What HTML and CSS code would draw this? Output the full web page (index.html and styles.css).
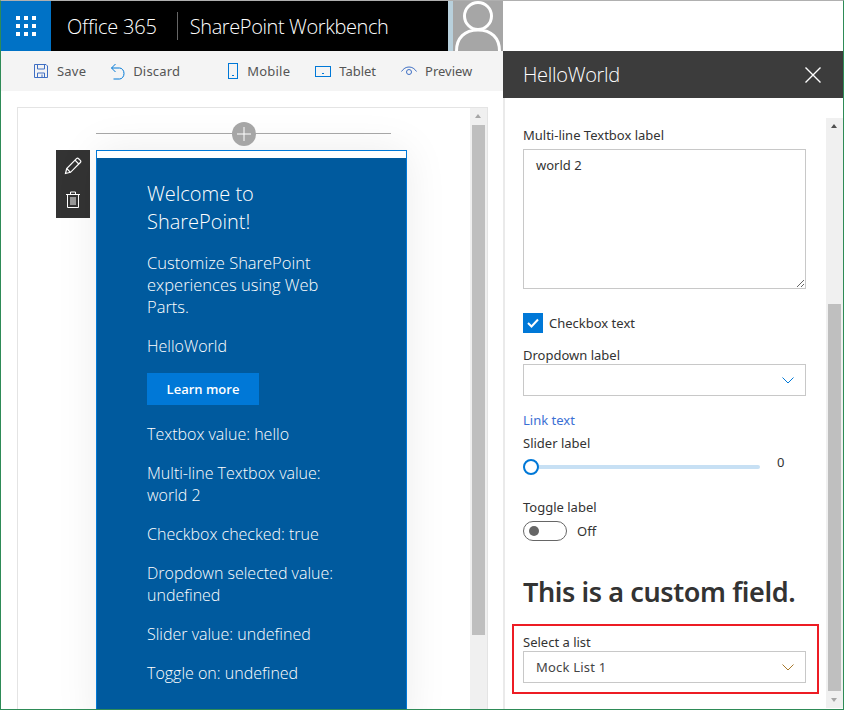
FILE: index.html
```html
<!DOCTYPE html>
<html lang="en">
<head>
    <meta charset="UTF-8">
    <title>SharePoint Workbench</title>
    <link rel="stylesheet" href="styles.css">
</head>
<body>
<div class="window">
    <div class="main">
        <div class="suite-bar">
            <div class="waffle">
                <svg width="20" height="20" viewBox="0 0 20 20" fill="#fff">
                    <rect x="0" y="0" width="4" height="4"/><rect x="8" y="0" width="4" height="4"/><rect x="16" y="0" width="4" height="4"/>
                    <rect x="0" y="8" width="4" height="4"/><rect x="8" y="8" width="4" height="4"/><rect x="16" y="8" width="4" height="4"/>
                    <rect x="0" y="16" width="4" height="4"/><rect x="8" y="16" width="4" height="4"/><rect x="16" y="16" width="4" height="4"/>
                </svg>
            </div>
            <span class="brand">Office 365</span>
            <span class="brand-sep"></span>
            <span class="app-name">SharePoint Workbench</span>
            <div class="avatar">
                <svg width="46" height="50" viewBox="0 0 46 50" fill="none" stroke="#fff" stroke-width="3">
                    <circle cx="23" cy="15" r="13.5"/>
                    <path d="M1.5 50c0-13 8-21 21.500-21s21.500 8 21.500 21"/>
                </svg>
            </div>
        </div>

        <div class="command-bar">
            <div class="cmd-group">
                <span class="cmd">
                    <svg width="16" height="16" viewBox="0 0 16 16" fill="none" stroke="#3f6fc4">
                        <path d="M1.500 1.500h11.500l1.500 1.500v11.500h-13z"/><path d="M4.500 1.500v4.500h7v-4.500"/><path d="M4.500 14.500v-4.500h7v4.500"/><path d="M9 11.500v3"/>
                    </svg>
                    Save
                </span>
                <span class="cmd">
                    <svg width="15" height="17" viewBox="0 0 15 17" fill="none" stroke="#0078d7">
                        <path d="M5.500 1l-4 4 4 4"/><path d="M1.500 5h8a4.500 5.500 0 0 1 0 11h-6"/>
                    </svg>
                    Discard
                </span>
            </div>
            <div class="cmd-group cmd-group-right">
                <span class="cmd">
                    <svg width="12" height="16" viewBox="0 0 12 16" fill="none" stroke="#0078d7">
                        <rect x="1.500" y="0.500" width="9" height="15"/><path d="M5 12.500h2"/>
                    </svg>
                    Mobile
                </span>
                <span class="cmd cmd-tight">
                    <svg width="16" height="12" viewBox="0 0 16 12" fill="none" stroke="#0078d7">
                        <rect x="0.500" y="1.500" width="15" height="10"/><path d="M7 8.500h2"/>
                    </svg>
                    Tablet
                </span>
                <span class="cmd cmd-tight">
                    <svg width="16" height="10" viewBox="0 0 16 10" fill="none" stroke="#3f6fc4">
                        <path d="M0.500 5.500c2-3 4.500-4.500 7.500-4.500s5.500 1.500 7.500 4.500"/><circle cx="8" cy="6" r="2.500"/>
                    </svg>
                    Preview
                </span>
            </div>
        </div>

        <div class="canvas">
            <div class="canvas-frame">
                <div class="canvas-content">
                    <div class="add-row">
                        <span class="add-btn">
                            <svg width="14" height="14" viewBox="0 0 14 14" stroke="#fff"><path d="M7 0v14M0 7h14"/></svg>
                        </span>
                    </div>
                    <div class="part-wrap">
                        <div class="part-tools">
                            <svg width="18" height="18" viewBox="0 0 18 18" fill="none" stroke="#fff" stroke-width="1.200">
                                <path d="M1.500 16.500l1.200-5L12.500 1.700a1.500 1.500 0 0 1 2.100 0l1.700 1.700a1.500 1.500 0 0 1 0 2.100L6.500 15.300z"/><path d="M2.700 11.500l3.800 3.800M11 3.200l3.800 3.800"/>
                            </svg>
                            <svg width="14" height="17" viewBox="0 0 14 17" fill="none" stroke="#fff">
                                <path d="M0 3.500h14M4.500 3.500v-2.500h5v2.500M1.500 3.500v13h11v-13M5 6v8M7 6v8M9 6v8"/>
                            </svg>
                        </div>
                        <div class="part">
                            <div class="part-top"></div>
                            <div class="part-body">
                                <h2 class="part-title">Welcome to SharePoint!</h2>
                                <p class="part-sub">Customize SharePoint experiences using Web Parts.</p>
                                <p>HelloWorld</p>
                                <a class="learn-btn">Learn more</a>
                                <p>Textbox value: hello</p>
                                <p>Multi-line Textbox value: world 2</p>
                                <p>Checkbox checked: true</p>
                                <p>Dropdown selected value: undefined</p>
                                <p>Slider value: undefined</p>
                                <p>Toggle on: undefined</p>
                            </div>
                        </div>
                    </div>
                </div>
                <div class="scrollbar canvas-scroll">
                    <span class="arrow-up"></span>
                    <span class="thumb"></span>
                    <span class="arrow-down"></span>
                </div>
            </div>
        </div>
    </div>

    <div class="side">
        <div class="side-gap"></div>
        <div class="panel">
            <div class="panel-head">
                <span class="panel-title">HelloWorld</span>
                <svg width="16" height="16" viewBox="0 0 16 16" stroke="#fff" stroke-width="1.400"><path d="M0.500 0.500l15 15M15.500 0.500l-15 15"/></svg>
            </div>
            <div class="panel-main">
                <div class="panel-body">
                    <label class="field-label">Multi-line Textbox label</label>
                    <textarea class="textarea">world 2</textarea>

                    <div class="check-row">
                        <span class="checkbox">
                            <svg width="12" height="10" viewBox="0 0 12 10" fill="none" stroke="#fff" stroke-width="2"><path d="M1 5l3.500 3.500L11 1.500"/></svg>
                        </span>
                        Checkbox text
                    </div>

                    <label class="field-label dropdown-label">Dropdown label</label>
                    <div class="dropdown">
                        <span></span>
                        <svg class="chevron" width="12" height="7" viewBox="0 0 12 7" fill="none" stroke="#0078d7"><path d="M0.500 0.500L6 6l5.500-5.500"/></svg>
                    </div>

                    <a class="link">Link text</a>

                    <label class="field-label">Slider label</label>
                    <div class="slider-row">
                        <div class="slider"><span class="slider-knob"></span></div>
                        <span class="slider-value">0</span>
                    </div>

                    <label class="field-label toggle-label">Toggle label</label>
                    <div class="toggle-row">
                        <span class="toggle"><span class="toggle-dot"></span></span>
                        Off
                    </div>

                    <h1 class="custom-field">This is a custom field.</h1>

                    <div class="highlight">
                        <label class="field-label">Select a list</label>
                        <div class="dropdown">
                            <span class="dropdown-value">Mock List 1</span>
                            <svg class="chevron" width="12" height="7" viewBox="0 0 12 7" fill="none" stroke="#a8792c"><path d="M0.500 0.500L6 6l5.500-5.500"/></svg>
                        </div>
                    </div>
                </div>
                <div class="scrollbar panel-scroll">
                    <span class="arrow-up"></span>
                    <span class="thumb"></span>
                    <span class="arrow-down"></span>
                </div>
            </div>
        </div>
    </div>
</div>
</body>
</html>
```

FILE: styles.css
```css
* {
    box-sizing: border-box;
}

html, body {
    margin: 0;
    padding: 0;
}

body {
    font-family: "Noto Sans", "Open Sans", sans-serif;
    font-size: 13px;
    color: #333;
    background: #fff;
}

.window {
    display: flex;
    width: 844px;
    height: 710px;
    overflow: hidden;
    border: 1px solid #2e8b57;
    border-top-color: #b0b0b0;
}

.main {
    width: 502px;
    display: flex;
    flex-direction: column;
}

/* top bar */
.suite-bar {
    height: 50px;
    background: #000;
    color: #fff;
    display: flex;
    align-items: center;
}

.waffle {
    width: 50px;
    height: 50px;
    background: #0072c6;
    display: flex;
    align-items: center;
    justify-content: center;
}

.brand, .app-name {
    font-family: "Open Sans", sans-serif;
    font-weight: 300;
    font-size: 20px;
}

.brand {
    margin-left: 16px;
    letter-spacing: -0.2px;
}

.brand-sep {
    width: 1px;
    height: 28px;
    background: #666;
    margin: 0 12px 0 20px;
}

.app-name {
    letter-spacing: -0.4px;
}

.avatar {
    margin-left: auto;
    width: 55px;
    height: 50px;
    background: #a6a6a6;
    border-left: 5px solid #b8d0dc;
    display: flex;
    justify-content: center;
    overflow: hidden;
}

/* command bar */
.command-bar {
    height: 40px;
    background: #f4f4f4;
    display: flex;
    align-items: center;
    padding-left: 32px;
    font-size: 13px;
    letter-spacing: 0.2px;
    color: #555;
}

.cmd-group {
    display: flex;
    gap: 24px;
}

.cmd-group-right {
    margin-left: 47px;
    gap: 25px;
}

.cmd {
    display: flex;
    align-items: center;
    gap: 8px;
}

.cmd-tight {
    letter-spacing: 0;
}

/* canvas */
.canvas {
    flex: 1;
    min-height: 0;
    padding: 16px 16px 0 16px;
    overflow: hidden;
}

.canvas-frame {
    height: 640px;
    border: 1px solid #e4e4e4;
    display: flex;
    margin-right: -1px;
}

.canvas-content {
    flex: 1;
    padding: 0 62px 0 38px;
    min-width: 0;
    overflow: hidden;
}

.add-row {
    margin-left: 40px;
    margin-right: 17px;
    height: 26px;
    border-bottom: 1px solid #a6a6a6;
    position: relative;
}

.add-btn {
    position: absolute;
    left: 136px;
    top: 14px;
    width: 24px;
    height: 24px;
    border-radius: 50%;
    background: #a6a6a6;
    display: flex;
    align-items: center;
    justify-content: center;
}

.part-wrap {
    display: flex;
    margin-top: 16px;
}

.part-tools {
    width: 34px;
    height: 68px;
    flex: none;
    margin-right: 6px;
    background: #333;
    display: flex;
    flex-direction: column;
    align-items: center;
    gap: 16px;
    padding-top: 7px;
}

.part {
    width: 311px;
    flex: none;
    border: 1px solid #0078d7;
    border-bottom: 0;
    box-shadow: 0 0 40px rgba(0, 0, 0, 0.08);
}

.part-top {
    height: 7px;
    background: #fff;
}

.part-body {
    background: #005a9e;
    color: #fff;
    font-family: "Open Sans", sans-serif;
    font-weight: 300;
    padding: 22px 50px 30px 50px;
    font-size: 16px;
    line-height: 22px;
}

.part-title {
    font-size: 20px;
    font-weight: 300;
    line-height: 28px;
    margin: 0 0 16px 0;
    width: 170px;
}

.part-body p {
    margin: 0 0 17px 0;
}

.part-body .part-sub {
    font-size: 16.5px;
}

.learn-btn {
    display: block;
    width: 112px;
    height: 32px;
    line-height: 32px;
    margin: -1px 0 18px 0;
    background: #0078d7;
    text-align: center;
    font-size: 13px;
    font-weight: 600;
}

/* scrollbars */
.scrollbar {
    width: 17px;
    flex: none;
    background: #f0f0f0;
    display: flex;
    flex-direction: column;
    align-items: center;
    position: relative;
}

.thumb {
    display: block;
    width: 13px;
    background: #bfbfbf;
}

.arrow-up, .arrow-down {
    position: absolute;
    left: 5px;
    width: 0;
    height: 0;
    border-left: 3.500px solid transparent;
    border-right: 3.500px solid transparent;
}

.arrow-up {
    top: 6px;
    border-bottom: 4px solid #a6a6a6;
}

.arrow-down {
    bottom: 6px;
    border-top: 4px solid #505050;
}

.canvas-scroll .thumb {
    margin-top: 17px;
    height: 510px;
}

.panel-scroll {
    height: 590px;
    margin-top: 20px;
}

.panel-scroll .arrow-up {
    border-bottom-color: #505050;
}

.panel-scroll .arrow-down {
    border-top-color: #a6a6a6;
}

.panel-scroll .thumb {
    margin-top: 186px;
    height: 387px;
}

/* property pane */
.side {
    width: 340px;
    display: flex;
    flex-direction: column;
}

.side-gap {
    height: 50px;
    flex: none;
}

.panel {
    flex: 1;
    min-height: 0;
    border-left: 2px solid #eaeaea;
    display: flex;
    flex-direction: column;
}

.panel-head {
    height: 47px;
    flex: none;
    margin-left: -2px;
    background: #3c3c3c;
    color: #fff;
    display: flex;
    align-items: center;
    justify-content: space-between;
    padding: 0 22px 0 20px;
}

.panel-title {
    font-family: "Open Sans", sans-serif;
    font-weight: 300;
    font-size: 20px;
    letter-spacing: -0.3px;
}

.panel-main {
    flex: 1;
    min-height: 0;
    display: flex;
    justify-content: space-between;
}

.panel-body {
    width: 301px;
    padding: 27px 0 0 18px;
}

.field-label {
    display: block;
    font-size: 13px;
    line-height: 20px;
}

.textarea {
    display: block;
    width: 283px;
    height: 140px;
    margin-top: 4px;
    padding: 5px 12px;
    border: 1px solid #c8c8c8;
    border-radius: 0;
    outline: none;
    font-family: inherit;
    font-size: 13px;
    line-height: 20px;
    color: #333;
    background: #fff;
}

.check-row {
    display: flex;
    align-items: center;
    gap: 6px;
    margin-top: 24px;
    height: 20px;
}

.checkbox {
    width: 20px;
    height: 20px;
    background: #0078d7;
    display: flex;
    align-items: center;
    justify-content: center;
}

.dropdown-label {
    margin-top: 12px;
    margin-bottom: -1px;
}

.dropdown {
    width: 283px;
    height: 32px;
    border: 1px solid #c8c8c8;
    display: flex;
    align-items: center;
    justify-content: space-between;
    padding: 0 11px 0 12px;
    color: #444;
}

.dropdown-value {
    letter-spacing: 0.2px;
}

.chevron {
    flex: none;
}

.link {
    display: block;
    color: #3b6fd4;
    line-height: 20px;
    margin-top: 14px;
}

.link + .field-label {
    margin-top: 3px;
}

.slider-row {
    display: flex;
    align-items: center;
    height: 24px;
}

.slider {
    width: 237px;
    height: 4px;
    margin-top: 3px;
    border-radius: 2px;
    background: #c7e0f4;
    position: relative;
}

.slider-knob {
    position: absolute;
    left: 0;
    top: -6px;
    width: 16px;
    height: 16px;
    border: 2px solid #0078d7;
    border-radius: 50%;
    background: #fff;
}

.slider-value {
    margin: -6px 0 0 17px;
}

.toggle-label {
    margin-top: 20px;
}

.toggle-row {
    display: flex;
    align-items: center;
    gap: 10px;
    margin-top: 4px;
    height: 20px;
}

.toggle {
    width: 44px;
    height: 20px;
    border: 1px solid #666;
    border-radius: 10px;
    display: flex;
    align-items: center;
    padding-left: 5px;
}

.toggle-dot {
    width: 10px;
    height: 10px;
    border-radius: 50%;
    background: #666;
}

.custom-field {
    font-size: 27px;
    font-weight: 600;
    letter-spacing: -0.4px;
    line-height: 36px;
    margin: 33px 0 0 0;
    color: #333;
    white-space: nowrap;
}

.highlight {
    width: 307px;
    height: 70px;
    margin: 14px 0 0 -11px;
    padding: 6px 0 0 9px;
    border: 2px solid #ed1c24;
}

.highlight .field-label {
    margin-bottom: -1px;
}
```
